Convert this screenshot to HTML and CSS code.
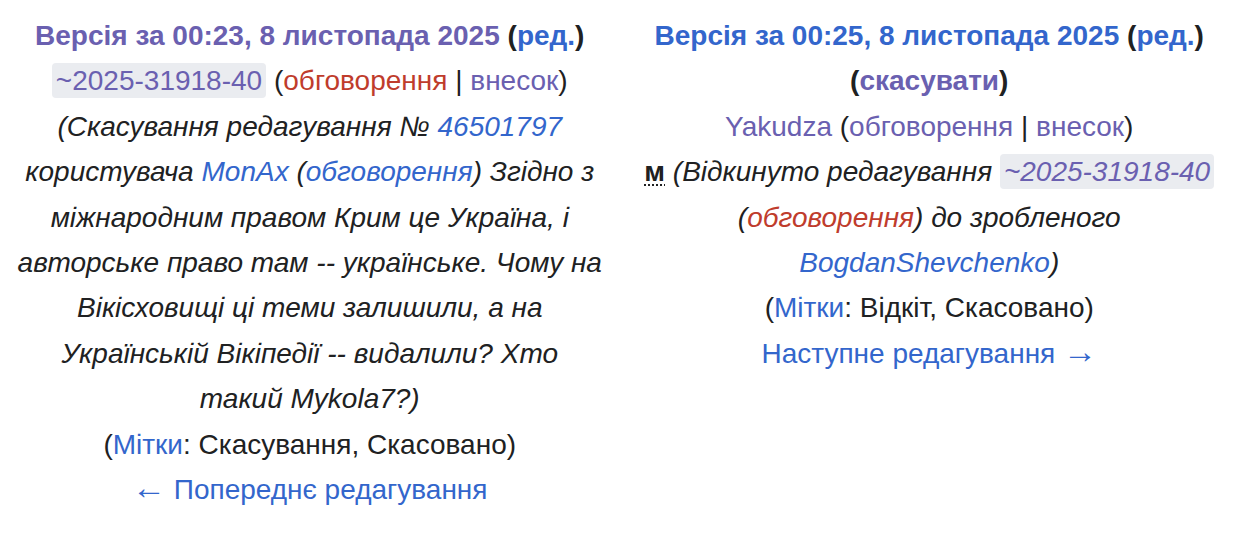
FILE: index.html
```html
<!DOCTYPE html>
<html lang="uk">
<head>
<meta charset="utf-8">
<title>Різниця між версіями</title>
<link rel="stylesheet" href="styles.css">
</head>
<body>
<div class="diff-header">
  <div class="diff-title">
    <div class="line title"><a class="visited">Версія за 00:23, 8 листопада 2025</a> (<a class="link">ред.</a>)</div>
    <div class="line"><a class="visited temp-user">~2025-31918-40</a> (<a class="red">обговорення</a> | <a class="visited">внесок</a>)</div>
    <div class="line comment">(Скасування редагування № <a class="link">46501797</a> користувача <a class="link">MonAx</a> (<a class="link">обговорення</a>) Згідно з міжнародним правом Крим це Україна, і авторське право там -- українське. Чому на Вікісховищі ці теми залишили, а на Українській Вікіпедії -- видалили? Хто такий Mykola7?)</div>
    <div class="line">(<a class="link">Мітки</a>: Скасування, Скасовано)</div>
    <div class="line"><a class="link"><span class="arrow">←</span> Попереднє редагування</a></div>
  </div>
  <div class="diff-title">
    <div class="line title"><a class="link">Версія за 00:25, 8 листопада 2025</a> (<a class="link">ред.</a>) (<a class="visited">скасувати</a>)</div>
    <div class="line"><a class="visited">Yakudza</a> (<a class="visited">обговорення</a> | <a class="visited">внесок</a>)</div>
    <div class="line"><abbr class="minor" title="Це незначне редагування">м</abbr> <span class="comment">(Відкинуто редагування <a class="visited temp-user">~2025-31918-40</a> (<a class="red">обговорення</a>) до зробленого<br><a class="link">BogdanShevchenko</a>)</span></div>
    <div class="line">(<a class="link">Мітки</a>: Відкіт, Скасовано)</div>
    <div class="line"><a class="link">Наступне редагування <span class="arrow">→</span></a></div>
  </div>
</div>
</body>
</html>
```
FILE: styles.css
```css
html, body {
  margin: 0;
  padding: 0;
  background: #ffffff;
}
body {
  font-family: "Liberation Sans", Arial, sans-serif;
  font-size: 28px;
  line-height: 45.4px;
  color: #202122;
}
.diff-header {
  display: grid;
  grid-template-columns: 1fr 1fr;
  width: 1239px;
  padding-top: 13px;
}
.diff-title {
  text-align: center;
  padding: 0 17px;
}
.title {
  font-weight: bold;
}
.comment {
  font-style: italic;
}
a {
  text-decoration: none;
  cursor: pointer;
}
.link {
  color: #3366cc;
}
.visited {
  color: #6a60b0;
}
.red {
  color: #bf3c2c;
}
.arrow {
  font-family: "Liberation Serif", serif;
  font-size: 34px;
  line-height: 1;
  vertical-align: 0;
}
.temp-user {
  background: #eaecf0;
  border-radius: 4px;
  padding: 2px 4px;
}
.minor {
  font-weight: bold;
  font-style: normal;
  text-decoration: underline dotted;
  text-decoration-thickness: 2px;
  text-underline-offset: 3px;
}
```
